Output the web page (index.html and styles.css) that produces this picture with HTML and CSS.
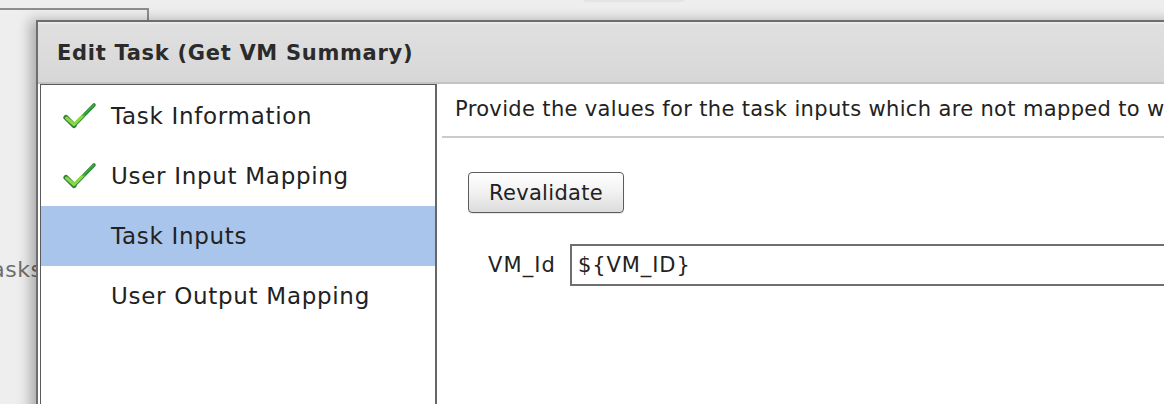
FILE: index.html
```html
<!DOCTYPE html>
<html>
<head>
<meta charset="utf-8">
<link rel="stylesheet" href="styles.css">
</head>
<body>
<div class="backdrop">
  <div class="bg-panel"></div>
  <div class="bg-tab"></div>
  <div class="bg-label">Tasks</div>
</div>
<div class="dialog">
  <div class="dialog-header">Edit Task (Get VM Summary)</div>
  <div class="dialog-body">
    <ul class="nav">
      <li class="nav-item">
        <svg class="check" viewBox="0 0 34 28" width="34" height="28">
          <path d="M3 15.5 L11 23.5" stroke="#2f7f35" stroke-width="5.2" stroke-linecap="round" fill="none"/>
          <path d="M11 23.5 L31 3" stroke="#2f8a3a" stroke-width="3.6" stroke-linecap="round" fill="none"/>
          <path d="M3.5 16 L11 22.5 L20 13.5" stroke="#8ad944" stroke-width="3" stroke-linecap="round" stroke-linejoin="round" fill="none"/>
          <path d="M20 13.5 L30.5 3" stroke="#45a84c" stroke-width="1.6" stroke-linecap="round" fill="none"/>
        </svg>
        <span>Task Information</span>
      </li>
      <li class="nav-item">
        <svg class="check" viewBox="0 0 34 28" width="34" height="28">
          <path d="M3 15.5 L11 23.5" stroke="#2f7f35" stroke-width="5.2" stroke-linecap="round" fill="none"/>
          <path d="M11 23.5 L31 3" stroke="#2f8a3a" stroke-width="3.6" stroke-linecap="round" fill="none"/>
          <path d="M3.5 16 L11 22.5 L20 13.5" stroke="#8ad944" stroke-width="3" stroke-linecap="round" stroke-linejoin="round" fill="none"/>
          <path d="M20 13.5 L30.5 3" stroke="#45a84c" stroke-width="1.6" stroke-linecap="round" fill="none"/>
        </svg>
        <span>User Input Mapping</span>
      </li>
      <li class="nav-item active"><span class="nocheck"></span><span>Task Inputs</span></li>
      <li class="nav-item"><span class="nocheck"></span><span>User Output Mapping</span></li>
    </ul>
    <div class="content">
      <p class="desc">Provide the values for the task inputs which are not mapped to workflow user inputs.</p>
      <div class="sep"></div>
      <button class="btn">Revalidate</button>
      <div class="field">
        <label class="field-label">VM_Id</label>
        <div class="field-input">${VM_ID}</div>
      </div>
    </div>
  </div>
</div>
</body>
</html>
```
FILE: styles.css
```css
html, body {
  margin: 0;
  padding: 0;
  width: 1164px;
  height: 404px;
  overflow: hidden;
  background: #eeeeee;
  font-family: "DejaVu Sans", Verdana, sans-serif;
  color: #222;
}
.backdrop {
  position: absolute;
  inset: 0;
}
.bg-panel {
  position: absolute;
  left: -10px;
  top: 8px;
  width: 155px;
  height: 600px;
  border: 2px solid #8e8e8e;
}
.bg-tab {
  position: absolute;
  left: 583px;
  top: -4px;
  width: 102px;
  height: 6px;
  background: #e4e4e4;
  border-radius: 0 0 3px 3px;
}
.bg-label {
  position: absolute;
  left: -19px;
  top: 257px;
  font-size: 22px;
  letter-spacing: 0.5px;
  color: #6e6e6e;
}
.dialog {
  position: absolute;
  left: 36px;
  top: 20px;
  width: 1200px;
  height: 420px;
  border: 2px solid #6e6e6e;
  background: #e0e0e0;
  box-shadow: -6px 0 12px rgba(0, 0, 0, 0.28);
  display: flex;
  flex-direction: column;
}
.dialog-header {
  height: 58px;
  border-top: 2px solid #e9e9e9;
  border-bottom: 2px solid #c3c3c3;
  background: linear-gradient(#e0e0e0, #d7d7d7);
  font-weight: bold;
  font-size: 21px;
  letter-spacing: 0.7px;
  color: #2b2b2b;
  padding-left: 19px;
  line-height: 58px;
  box-sizing: content-box;
}
.dialog-body {
  flex: 1;
  display: flex;
  background: #fff;
}
.nav {
  flex: none;
  list-style: none;
  margin: 0;
  padding: 0;
  width: 394px;
  margin-left: 2px;
  border: 1px solid #5a5a5a;
  border-bottom: none;
  border-right: 2px solid #666;
  background: #fff;
  padding-top: 1px;
}
.nav-item {
  height: 60px;
  display: flex;
  align-items: center;
  font-size: 23px;
  letter-spacing: 0.7px;
  color: #222;
}
.nav-item.active {
  background: #a9c5ec;
}
.check {
  margin-left: 22px;
  margin-right: 14px;
  margin-top: -1px;
  flex: none;
}
.nocheck {
  width: 34px;
  margin-left: 22px;
  margin-right: 14px;
}
.content {
  flex: 1;
  display: flex;
  flex-direction: column;
  align-items: flex-start;
  padding-left: 5px;
  min-width: 0;
}
.desc {
  margin: 0;
  padding-left: 13px;
  height: 52px;
  line-height: 51px;
  font-size: 21px;
  letter-spacing: 0.35px;
  white-space: nowrap;
  color: #222;
}
.sep {
  align-self: stretch;
  height: 2px;
  background: #cbcbcb;
}
.btn {
  margin-top: 34px;
  margin-left: 26px;
  width: 156px;
  height: 41px;
  font-family: "DejaVu Sans", Verdana, sans-serif;
  font-size: 21px;
  letter-spacing: 0.3px;
  color: #222;
  border: 1px solid #5c5c5c;
  border-radius: 4px;
  background: linear-gradient(#ffffff, #f1f1f1 50%, #dcdcdc);
  box-shadow: 0 1px 1px rgba(0,0,0,0.1);
  padding: 0;
}
.field {
  margin-top: 31px;
  display: flex;
  align-items: center;
  gap: 14px;
  margin-left: 46px;
}
.field-label {
  font-size: 21px;
  letter-spacing: 1.1px;
  color: #222;
}
.field-input {
  width: 700px;
  height: 38px;
  border: 2px solid #6f6f6f;
  border-right: none;
  line-height: 38px;
  padding-left: 6px;
  font-size: 21px;
  letter-spacing: 0.9px;
  color: #222;
  background: #fff;
}
```
